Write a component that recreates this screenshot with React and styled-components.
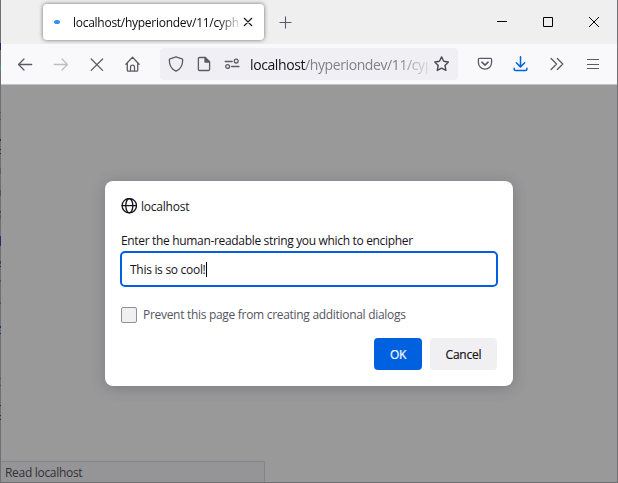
import React from 'react';
import styled, { createGlobalStyle } from 'styled-components';

const Global = createGlobalStyle`
  * { box-sizing: border-box; }
  body { margin: 0; font: 12px/16px "Open Sans", "Noto Sans", sans-serif; color: #15141a; overflow: hidden; }
  button, input { font: inherit; color: inherit; }
  svg { display: block; flex: none; }
`;
const Window = styled.div`
  width: 618px; height: 483px; display: flex; flex-direction: column; position: relative;
  background: #f9f9fb; padding: 0 1px 1px; overflow: hidden;
  &::after { content: ''; position: absolute; inset: 0; border: 1px solid #707073; border-top: 0; pointer-events: none; }
`;
const EdgeMark = styled.i`
  position: absolute; z-index: 2; left: 0; width: 1px;
  top: ${p => p.$y}px; height: ${p => p.$h}px; background: ${p => p.$c};
`;
const TitleBar = styled.header`
  height: 44px; background: #efefef; display: flex; align-items: flex-start; flex: none;
`;
const Tab = styled.div`
  margin: 4px 0 0 42px; width: 221px; height: 36px; border-radius: 4px; background: #fff;
  box-shadow: 0 0 4px rgba(0,0,0,.55); display: flex; align-items: center; padding-left: 11px;
`;
const Loading = styled.i`
  width: 6px; height: 4px; border-radius: 50%; background: #2f8ff5; margin-right: 13px; flex: none;
`;
const TabTitle = styled.span`
  width: 168px; padding-top: 2px; white-space: nowrap; color: #0c0c0d; letter-spacing: ${p => p.$ls}px;
  mask-image: linear-gradient(90deg, #000 145px, transparent 170px);
`;
const IconButton = styled.button`
  border: 0; padding: 0; background: none; display: grid; place-items: center; flex: none;
  width: ${p => p.$w || 36}px; height: ${p => p.$h || 32}px; color: ${p => p.$c || '#5b5b66'};
`;
const WindowControls = styled.div`
  display: flex; margin-left: auto;
`;
const NavBar = styled.nav`
  height: 40px; flex: none; display: flex; align-items: center; padding: 0 6px;
  background: #f9f9fb;
`;
const AddressBar = styled.div`
  width: 298px; height: 32px; border-radius: 4px; background: #f0f0f4; display: flex; align-items: center;
  margin: 0 9px 0 10px;
`;
const Address = styled.div`
  width: 178px; margin-left: 3px; font-size: 14px; line-height: 20px; white-space: nowrap; padding-top: 2px;
  color: #808087; letter-spacing: ${p => p.$ls}px;
  mask-image: linear-gradient(90deg, #000 148px, transparent 184px);
  b { font-weight: 400; color: #15141a; }
`;
const Page = styled.main`
  flex: 1; background: #99999a; border-top: 1px solid #c4c4c7; padding: 96px 0 0 104px; position: relative;
`;
const Dialog = styled.section`
  width: 408px; height: 205px; background: #fff; border-radius: 8px; padding: 16px;
  box-shadow: 0 2px 14px rgba(58,57,68,.3); display: flex; flex-direction: column;
`;
const Origin = styled.div`
  display: flex; align-items: center; gap: 4px; height: 18px; font-weight: 500; letter-spacing: ${p => p.$ls}px;
`;
const OriginName = styled.span`
  padding-top: 1px;
`;
const Prompt = styled.label`
  margin-top: 18px; line-height: 16px; white-space: nowrap; letter-spacing: ${p => p.$ls}px;
`;
const Field = styled.div`
  width: 378px; height: 36px; margin: 2px 0 0 -1px; border: 2px solid #0060df; border-radius: 5px;
  display: flex; align-items: center; padding: 2px 0 0 8px; letter-spacing: ${p => p.$ls}px;
`;
const Caret = styled.i`
  width: 1px; height: 15px; background: #000; margin-top: -2px;
`;
const CheckRow = styled.label`
  display: flex; align-items: center; gap: 6px; height: 16px; margin-top: 20px; color: #55555f;
  white-space: nowrap; letter-spacing: ${p => p.$ls}px;
`;
const CheckBox = styled.i`
  width: 16px; height: 16px; border: 1px solid #8f8f9d; border-radius: 2px; background: #f0f0f1; flex: none;
`;
const Actions = styled.div`
  display: flex; justify-content: flex-end; gap: 8px; margin-top: 15px;
`;
const Action = styled.button`
  width: ${p => p.$w}px; height: 32px; border: 0; border-radius: 4px; padding: 2px 0 0; font-weight: 500;
  background: ${p => (p.$primary ? '#0061e0' : '#f0f0f2')}; color: ${p => (p.$primary ? '#fbfbfe' : '#15141a')};
  letter-spacing: ${p => p.$ls}px; -webkit-text-stroke: .2px currentColor;
`;
const Status = styled.div`
  position: absolute; left: 0; bottom: 0; width: 264px; height: 21px; background: #959598;
  border: 1px solid #858588; border-left: 0; border-bottom: 0; padding: 3px 4px 0; color: #323136; letter-spacing: ${p => p.$ls}px;
`;

function Icon({ size = 16, sw = 1.3, children }) {
  return (
    <svg width={size} height={size} viewBox="0 0 16 16" fill="none" stroke="currentColor" strokeWidth={sw}
      strokeLinecap="round" strokeLinejoin="round">{children}</svg>
  );
}

const marks = [
  [5, 2, '#8e6d55'], [43, 7, '#30206b'], [65, 6, '#4f8996'], [112, 1, '#315a7c'], [119, 1, '#315a7c'],
  [139, 2, '#2d2965'], [149, 1, '#2d2965'], [153, 1, '#2d2965'], [168, 6, '#70564f'], [190, 6, '#624b50'],
  [211, 2, '#443b62'], [215, 4, '#50664f'], [236, 10, '#302969'], [261, 3, '#56335e'], [266, 1, '#2d2965'],
  [280, 2, '#345c86'], [302, 2, '#345c86'], [326, 2, '#302969'], [328, 4, '#4e7b86'], [333, 1, '#302969'],
  [378, 1, '#315a7c'], [385, 1, '#355461'], [405, 1, '#302969'], [415, 1, '#302969'], [419, 1, '#302969'],
];

export default function App() {
  return (
    <Window>
      <Global />
      {marks.map(([y, h, c]) => <EdgeMark key={y} $y={y} $h={h} $c={c} />)}
      <TitleBar>
        <Tab>
          <Loading />
          <TabTitle $ls={-0.27}>localhost/hyperiondev/11/cyph</TabTitle>
          <IconButton $w={14} $h={24} $c="#15141a" aria-label="Close tab">
            <Icon size={10} sw={1.8}><path d="M2 2l12 12M14 2L2 14" /></Icon>
          </IconButton>
        </Tab>
        <IconButton $w={43} $h={45} aria-label="New tab">
          <svg width="13" height="13"><path d="M6.5 .5v12M.5 6.5h12" stroke="currentColor" strokeWidth="1.1" /></svg>
        </IconButton>
        <WindowControls>
          <IconButton $w={46} $h={43} $c="#000" aria-label="Minimize">
            <svg width="10" height="10"><path d="M0 4.5h10" stroke="currentColor" /></svg>
          </IconButton>
          <IconButton $w={46} $h={43} $c="#000" aria-label="Maximize">
            <svg width="10" height="10"><path d="M.5 .5h9v9h-9z" stroke="currentColor" fill="none" /></svg>
          </IconButton>
          <IconButton $w={46} $h={43} $c="#000" aria-label="Close">
            <svg width="10" height="10"><path d="M0 0l10 10M10 0L0 10" stroke="currentColor" /></svg>
          </IconButton>
        </WindowControls>
      </TitleBar>
      <NavBar>
        <IconButton aria-label="Back"><Icon><path d="M14.7 8.5H1.5M7 3L1.5 8.5 7 14" /></Icon></IconButton>
        <IconButton $c="#bdbdc2" $w={36} aria-label="Forward"><Icon><path d="M1.3 8.5h13.2M9 3l5.5 5.5L9 14" /></Icon></IconButton>
        <IconButton aria-label="Stop"><Icon><path d="M2.2 3l11.4 11.4M13.6 3L2.2 14.4" /></Icon></IconButton>
        <IconButton $w={35} aria-label="Home">
          <Icon><path d="M.9 8.2L7.5 1.3l6.6 6.9M2.3 7v7.2q0 .9.9.9h8.6q.9 0 .9-.9V7M5.5 14.9v-3.7a2 2 0 0 1 4 0v3.7" /></Icon>
        </IconButton>
        <AddressBar>
          <IconButton $w={32} aria-label="Tracking protection">
            <Icon><path d="M8 .8l6 2.1q.7.2.7 1c0 6.3-2.2 9.2-6.7 11.3C3.5 13.1 1.3 10.2 1.3 3.9q0-.8.7-1z" /></Icon>
          </IconButton>
          <IconButton $w={24} aria-label="Page information">
            <Icon><path d="M3.6 1.5h5.7L13.6 6v7.3q0 1.2-1.2 1.2H3.6q-1.2 0-1.2-1.2V2.7q0-1.2 1.2-1.2z" /><path d="M9 1.5V6h4.6z" fill="currentColor" /></Icon>
          </IconButton>
          <IconButton $w={31} aria-label="Permissions">
            <Icon><path d="M1.2 5.5h7M7.5 10.5H15" /><circle cx="12.2" cy="5.1" r="1.9" /><circle cx="3.6" cy="10.5" r="1.9" /></Icon>
          </IconButton>
          <Address $ls={-0.4}><b>localhost</b>/hyperiondev/11/cyp</Address>
          <IconButton $w={26} $c="#4a4a54" aria-label="Bookmark">
            <Icon sw={1.4}><path d="M8.6 .9l2.1 4.4 4.7.7-3.4 3.5.9 4.9-4.3-2.3-4.3 2.3.9-4.9L1.8 6l4.7-.7z" /></Icon>
          </IconButton>
        </AddressBar>
        <IconButton aria-label="Pocket">
          <Icon><path d="M2.6 2.3h10.8q1.2 0 1.2 1.2v3.1a6.6 6.6 0 0 1-13.2 0V3.5q0-1.2 1.2-1.2z" /><path d="M4.9 6.2L8 9.1l3.1-2.9" strokeWidth="1.6" /></Icon>
        </IconButton>
        <IconButton $c="#0061e0" aria-label="Downloads">
          <Icon sw={1.5}><path d="M7.5 .8v9.8M3.3 6.8l4.2 4.1 4.2-4.1M1.2 12.2v1q0 1.4 1.4 1.4h9.9q1.4 0 1.4-1.4v-1" /></Icon>
        </IconButton>
        <IconButton aria-label="More tools"><Icon><path d="M2.1 2.5L7.6 8l-5.5 5.5M8.3 2.5L13.8 8l-5.5 5.5" /></Icon></IconButton>
        <IconButton aria-label="Menu">
          <svg width="12" height="11"><path d="M0 .5h12M0 5.5h12M0 9.5h12" stroke="currentColor" strokeWidth="1.2" /></svg>
        </IconButton>
      </NavBar>
      <Page>
        <Dialog>
          <Origin $ls={-0.22}>
            <Icon sw={1.3}><circle cx="8.3" cy="7.7" r="7.2" /><ellipse cx="8.3" cy="7.7" rx="3.5" ry="7.2" /><path d="M1.1 7.7h14.4" /></Icon>
            <OriginName>localhost</OriginName>
          </Origin>
          <Prompt $ls={-0.33}>Enter the human-readable string you which to encipher</Prompt>
          <Field $ls={-0.29}>This is so cool!<Caret /></Field>
          <CheckRow $ls={-0.3}><CheckBox />Prevent this page from creating additional dialogs</CheckRow>
          <Actions>
            <Action $w={48} $primary $ls={-0.3}>OK</Action>
            <Action $w={67} $ls={-0.2}>Cancel</Action>
          </Actions>
        </Dialog>
        <Status $ls={-0.3}>Read localhost</Status>
      </Page>
    </Window>
  );
}
